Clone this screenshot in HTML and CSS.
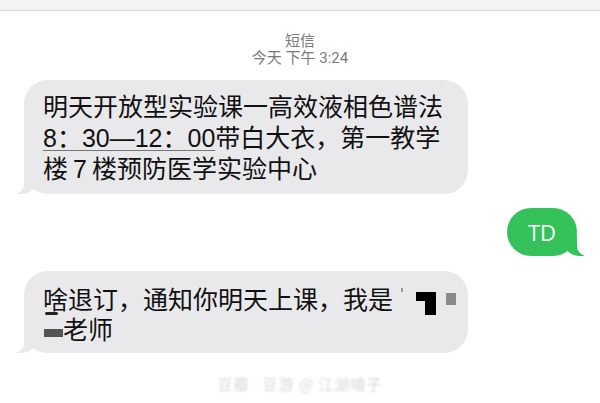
FILE: index.html
```html
<!DOCTYPE html>
<html lang="zh-CN">
<head>
  <meta charset="UTF-8" />
  <meta name="viewport" content="width=device-width, initial-scale=1.0" />
  <title>短信</title>
  <link rel="stylesheet" href="styles.css">
</head>
<body>
  <div class="topbar"></div>

  <header class="header">
    <div class="title">短信</div>
    <div class="time">今天 下午 3:24</div>
  </header>

  <main class="thread">
    <div class="bubble in">
      <p>明天开放型实验课一高效液相色谱法</p>
      <p><span class="link">8：30—12：00</span>带白大衣，第一教学</p>
      <p>楼<span class="num">7</span>楼预防医学实验中心</p>
    </div>

    <div class="row-out">
      <div class="bubble out">TD</div>
    </div>

    <div class="bubble in second">
      <p><span class="mark-under">啥</span>退订，通知你明天上课，我是</p>
      <p><span class="mark-bar"></span>老师</p>
      <span class="blot blot-a"></span>
      <span class="blot blot-b"></span>
      <span class="blot blot-c"></span>
    </div>
  </main>

  <footer class="watermark">豆瓣&nbsp;&nbsp; 豆游 @ 江湖嗑子</footer>
</body>
</html>
```
FILE: styles.css
```css
* {
  box-sizing: border-box;
}
body {
  margin: 0;
  background: #fff;
  font-family: "Noto Sans CJK SC", "Noto Sans", sans-serif;
  color: #111;
  width: 600px;
  height: 403px;
  overflow: hidden;
}
p {
  margin: 0;
}

.topbar {
  height: 11px;
  background: #f4f4f4;
  border-bottom: 1px solid #d8d8d8;
}

.header {
  text-align: center;
  color: #7a7a7a;
  padding-top: 20px;
}
.header .title {
  font-size: 15px;
  line-height: 18px;
}
.header .time {
  font-family: Roboto, "Noto Sans CJK SC", sans-serif;
  font-size: 15px;
  line-height: 19px;
}

.thread {
  display: flex;
  flex-direction: column;
  padding: 0 23px 0 24px;
}

.bubble {
  position: relative;
  font-size: 25px;
  line-height: 31px;
  border-radius: 24px;
}
.bubble.in {
  width: 444px;
  background: #e9e9eb;
  padding: 10px 19px 11px 19px;
  margin-top: 12px;
}
.bubble.in::before {
  content: "";
  position: absolute;
  left: -7px;
  bottom: 0;
  width: 20px;
  height: 20px;
  background: #e9e9eb;
  border-bottom-right-radius: 16px 14px;
}
.bubble.in::after {
  content: "";
  position: absolute;
  left: -26px;
  bottom: 0;
  width: 26px;
  height: 20px;
  background: #fff;
  border-bottom-right-radius: 10px;
}

.link {
  font-family: "Liberation Sans", "Noto Sans CJK SC", sans-serif;
  line-height: 20px;
  text-decoration: underline;
  text-decoration-color: #777;
  text-decoration-thickness: 1px;
  text-underline-offset: 3px;
}
.num {
  font-family: "Liberation Sans", sans-serif;
  line-height: 20px;
  margin: 0 5px;
}

.row-out {
  display: flex;
  justify-content: flex-end;
  margin-top: 14px;
}
.bubble.out {
  width: 70px;
  height: 48px;
  background: #35c25a;
  color: #fff;
  font-family: "Open Sans", Roboto, sans-serif;
  font-size: 22px;
  line-height: 48px;
  text-align: center;
}
.bubble.out::before {
  content: "";
  position: absolute;
  right: -7px;
  bottom: 0;
  width: 20px;
  height: 20px;
  background: #35c25a;
  border-bottom-left-radius: 16px 14px;
}
.bubble.out::after {
  content: "";
  position: absolute;
  right: -26px;
  bottom: 0;
  width: 26px;
  height: 20px;
  background: #fff;
  border-bottom-left-radius: 10px;
}

.bubble.second {
  margin-top: 15px;
  padding: 12px 19px 10px 19px;
  line-height: 30px;
}

.mark-under {
  position: relative;
}
.mark-under::after {
  content: "";
  position: absolute;
  left: 2px;
  bottom: 1px;
  width: 13px;
  height: 3px;
  background: #222;
  border-radius: 2px;
}
.mark-bar {
  display: inline-block;
  width: 19px;
  height: 8px;
  margin-left: 1px;
  background: #555;
  vertical-align: 2px;
}

.blot {
  position: absolute;
}
.blot-a {
  left: 392px;
  top: 21px;
  width: 20px;
  height: 9px;
  background: #000;
}
.blot-a::after {
  content: "";
  position: absolute;
  left: 9px;
  top: 9px;
  width: 11px;
  height: 14px;
  background: #000;
}
.blot-b {
  left: 422px;
  top: 22px;
  width: 10px;
  height: 12px;
  background: #8a8a8a;
}
.blot-c {
  left: 377px;
  top: 17px;
  width: 2px;
  height: 4px;
  background: #999;
}

.watermark {
  margin-top: 20px;
  text-align: center;
  font-size: 15px;
  color: #d8d8d8;
  letter-spacing: 1px;
  filter: blur(1.1px);
}
```
